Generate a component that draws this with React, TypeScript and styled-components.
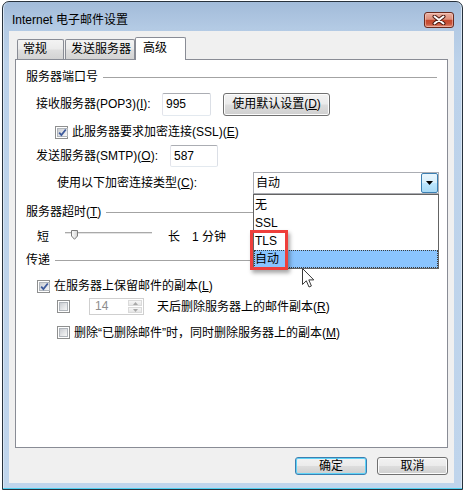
import React from "react";
import styled, { createGlobalStyle } from "styled-components";

const FONT = `"Liberation Sans", "Noto Sans CJK SC", sans-serif`;

const GlobalStyle = createGlobalStyle`
  html, body { margin: 0; padding: 0; background: #ffffff; }
  body { font-family: ${FONT}; font-size: 12px; color: #000; }
  * { box-sizing: border-box; }
`;

const Screen = styled.div`
  width: 464px;
  height: 490px;
  padding: 1px 1px 0 2px;
  overflow: hidden;
`;

const Window = styled.div`
  width: 461px;
  height: 489px;
  border: 1px solid #27313c;
  border-radius: 7px 7px 0 0;
  background: linear-gradient(180deg, #a2bbd9 0px, #b3cae4 26px, #bcd2ea 60px, #c0d5ec 100%);
  box-shadow: inset 0 -1px 0 #4fd0f0, inset 1px 0 0 #d9e6f4, inset -1px 0 0 #d9e6f4;
  padding: 0 8px 6px 6px;
  display: flex;
  flex-direction: column;
`;

const TitleBar = styled.div`
  height: 29px;
  display: flex;
  align-items: flex-start;
  padding-left: 3px;
`;

const TitleText = styled.div`
  flex: 1;
  margin-top: 11px;
  line-height: 14px;
  font-size: 12px;
  color: #000;
`;

const CloseButton = styled.div`
  width: 30px;
  height: 16px;
  margin-top: 10px;
  border: 1px solid #6a2a1e;
  border-radius: 3px;
  background: linear-gradient(180deg, #eab0a2 0%, #dd8f7b 45%, #c5472c 52%, #c85339 78%, #e0907a 100%);
  box-shadow: inset 0 0 0 1px rgba(255, 220, 210, 0.45);
  display: flex;
  align-items: center;
  justify-content: center;
`;

const Client = styled.div`
  height: 452px;
  background: #f0f0f0;
  display: flex;
  flex-direction: column;
  padding-top: 6px;
`;

const TabStrip = styled.div`
  height: 22px;
  display: flex;
  align-items: flex-end;
  padding-left: 8px;
`;

const Tab = styled.div<{ $w: number; $active?: boolean; $gap?: number }>`
  width: ${(p) => p.$w}px;
  height: ${(p) => (p.$active ? 23 : 20)}px;
  margin-right: ${(p) => p.$gap ?? 0}px;
  margin-bottom: ${(p) => (p.$active ? -1 : 0)}px;
  position: relative;
  z-index: ${(p) => (p.$active ? 2 : 1)};
  border: 1px solid #898c95;
  border-bottom: none;
  border-radius: 2px 2px 0 0;
  padding-left: ${(p) => (p.$active ? 7 : 5)}px;
  line-height: ${(p) => (p.$active ? 21 : 19)}px;
  background: ${(p) =>
    p.$active
      ? "#ffffff"
      : "linear-gradient(180deg, #f3f3f3 0%, #ebebeb 45%, #dedede 55%, #d3d3d3 100%)"};
`;

const Panel = styled.div`
  margin-left: 6px;
  width: 433px;
  height: 389px;
  border: 1px solid #898c95;
  background: #ffffff;
  position: relative;
  display: flex;
  flex-direction: column;
`;

const Group = styled.div<{ $mt: number }>`
  display: flex;
  align-items: center;
  height: 16px;
  margin-top: ${(p) => p.$mt}px;
  padding: 0 10px;
  line-height: 16px;
  &::after {
    content: "";
    flex: 1;
    height: 1px;
    background: #a3a3a3;
    margin-left: 5px;
  }
`;

const Row = styled.div<{ $mt: number; $indent: number; $h: number }>`
  display: flex;
  align-items: center;
  height: ${(p) => p.$h}px;
  margin-top: ${(p) => p.$mt}px;
  padding-left: ${(p) => p.$indent}px;
  line-height: 14px;
`;

const Label = styled.span<{ $w?: number; $ml?: number }>`
  display: inline-block;
  flex: none;
  width: ${(p) => (p.$w ? `${p.$w}px` : "auto")};
  margin-left: ${(p) => p.$ml ?? 0}px;
  white-space: nowrap;
`;

const U = styled.span`
  text-decoration: underline;
`;

const TextBox = styled.div<{ $w: number; $h: number }>`
  width: ${(p) => p.$w}px;
  height: ${(p) => p.$h}px;
  flex: none;
  border: 1px solid;
  border-color: #abadb3 #dbdfe6 #e3e9ef #e2e3ea;
  border-radius: 2px;
  background: #fff;
  padding-left: 3px;
  line-height: ${(p) => p.$h - 2}px;
`;

const WinButton = styled.div<{ $w: number; $h: number; $ml?: number; $default?: boolean }>`
  width: ${(p) => p.$w}px;
  height: ${(p) => p.$h}px;
  margin-left: ${(p) => p.$ml ?? 0}px;
  flex: none;
  border: 1px solid ${(p) => (p.$default ? "#3c7fb1" : "#707070")};
  border-radius: 3px;
  background: linear-gradient(180deg, #f2f2f2 0%, #ebebeb 48%, #dddddd 52%, #cfcfcf 100%);
  box-shadow: inset 0 0 0 1px ${(p) => (p.$default ? "#5fd3f7" : "#fcfcfc")};
  text-align: center;
  line-height: ${(p) => p.$h - 2}px;
`;

const CheckBox = styled.span<{ $ml?: number }>`
  width: 13px;
  height: 13px;
  flex: none;
  margin-right: 4px;
  margin-left: ${(p) => p.$ml ?? 0}px;
  border: 1px solid #8e8f8f;
  background: #fff;
  padding: 1px;
  display: flex;
`;

const CheckInner = styled.span`
  flex: 1;
  border: 1px solid #b0b5bb;
  background: linear-gradient(135deg, #c9ccd1 0%, #e6e7e9 60%, #f6f6f6 100%);
  display: flex;
  align-items: center;
  justify-content: center;
`;

const Combo = styled.div`
  position: relative;
  width: 186px;
  height: 22px;
  flex: none;
  border: 1px solid #abadb3;
  background: #fff;
  display: flex;
  align-items: stretch;
`;

const ComboText = styled.span`
  flex: 1;
  padding-left: 2px;
  line-height: 20px;
`;

const ComboArrow = styled.span`
  width: 17px;
  margin: 0 0 0 0;
  border: 1px solid #3c7fb1;
  border-radius: 2px;
  background: linear-gradient(180deg, #eaf6fd 0%, #d9f0fc 48%, #bee6fd 52%, #a7d9f5 100%);
  display: flex;
  align-items: center;
  justify-content: center;
`;

const DropList = styled.div`
  position: absolute;
  left: -1px;
  top: 21px;
  width: 186px;
  border: 1px solid #646464;
  background: #fff;
  padding-top: 1px;
  z-index: 5;
`;

const DropItem = styled.div<{ $active?: boolean }>`
  height: 18px;
  line-height: 18px;
  padding-left: 1px;
  background: ${(p) => (p.$active ? "#8ac4fe" : "transparent")};
  outline: ${(p) => (p.$active ? "1px dotted #3a3a3a" : "none")};
  outline-offset: -1px;
`;

const Slider = styled.div`
  position: relative;
  width: 87px;
  height: 16px;
  margin-left: 16px;
  flex: none;
  &::before {
    content: "";
    position: absolute;
    left: 0;
    right: 0;
    top: 3px;
    height: 3px;
    background: linear-gradient(180deg, #a9a9a9 0, #a9a9a9 1px, #e3e3e3 1px, #e3e3e3 2px, #ffffff 2px);
  }
`;

const Thumb = styled.svg`
  position: absolute;
  left: 6px;
  top: 1px;
`;

const Spin = styled.div`
  width: 55px;
  height: 17px;
  flex: none;
  margin-left: 15px;
  border: 1px solid #cfcfcf;
  background: #fff;
  display: flex;
`;

const SpinText = styled.span`
  flex: 1;
  padding-left: 5px;
  color: #8d8d8d;
  line-height: 15px;
`;

const SpinButtons = styled.div`
  width: 15px;
  display: flex;
  flex-direction: column;
  padding: 1px 1px 1px 0;
  gap: 1px;
`;

const SpinPart = styled.span`
  flex: 1;
  border: 1px solid #dadada;
  background: linear-gradient(180deg, #f6f6f6, #e6e6e6);
  display: flex;
  align-items: center;
  justify-content: center;
`;

const Highlight = styled.div`
  position: absolute;
  left: 234px;
  top: 170px;
  width: 38px;
  height: 40px;
  border: 3px solid #ee3f3b;
  box-shadow: 2px 3px 4px rgba(0, 0, 0, 0.35);
  z-index: 6;
`;

const Cursor = styled.svg`
  position: absolute;
  left: 286px;
  top: 208px;
  z-index: 7;
`;

const ButtonRow = styled.div`
  display: flex;
  justify-content: flex-end;
  gap: 10px;
  margin-top: 9px;
  padding-right: 6px;
`;

function Check({ checked, ml }: { checked?: boolean; ml?: number }) {
  return (
    <CheckBox $ml={ml}>
      <CheckInner>
        {checked && (
          <svg width="9" height="9" viewBox="0 0 9 9">
            <path d="M1.2 4.6 L3.4 7 L7.8 1.5" fill="none" stroke="#3d5a9c" strokeWidth="1.8" />
          </svg>
        )}
      </CheckInner>
    </CheckBox>
  );
}

export default function App() {
  return (
    <>
      <GlobalStyle />
      <Screen>
        <Window>
          <TitleBar>
            <TitleText>Internet 电子邮件设置</TitleText>
            <CloseButton>
              <svg width="14" height="10" viewBox="0 0 14 10">
                <path d="M2.5 1.5 L11.5 8.5 M11.5 1.5 L2.5 8.5" stroke="#4b1a12" strokeWidth="4" strokeLinecap="round" />
                <path d="M2.5 1.5 L11.5 8.5 M11.5 1.5 L2.5 8.5" stroke="#ffffff" strokeWidth="2" strokeLinecap="round" />
              </svg>
            </CloseButton>
          </TitleBar>
          <Client>
            <TabStrip>
              <Tab $w={47} $gap={1}>常规</Tab>
              <Tab $w={70}>发送服务器</Tab>
              <Tab $w={51} $active>高级</Tab>
            </TabStrip>
            <Panel>
              <Group $mt={9}>服务器端口号</Group>
              <Row $mt={7} $indent={20} $h={24}>
                <Label $w={126}>
                  接收服务器(POP3)(<U>I</U>):
                </Label>
                <TextBox $w={49} $h={23}>995</TextBox>
                <WinButton $w={107} $h={23} $ml={12}>
                  使用默认设置(<U>D</U>)
                </WinButton>
              </Row>
              <Row $mt={9} $indent={39} $h={14}>
                <Check checked />
                <Label>
                  此服务器要求加密连接(SSL)(<U>E</U>)
                </Label>
              </Row>
              <Row $mt={6} $indent={20} $h={22}>
                <Label $w={134}>
                  发送服务器(SMTP)(<U>O</U>):
                </Label>
                <TextBox $w={48} $h={22}>587</TextBox>
              </Row>
              <Row $mt={5} $indent={41} $h={22}>
                <Label $w={196}>
                  使用以下加密连接类型(<U>C</U>):
                </Label>
                <Combo>
                  <ComboText>自动</ComboText>
                  <ComboArrow>
                    <svg width="7" height="4" viewBox="0 0 7 4">
                      <path d="M0 0 H7 L3.5 4 Z" fill="#000" />
                    </svg>
                  </ComboArrow>
                  <DropList>
                    <DropItem>无</DropItem>
                    <DropItem>SSL</DropItem>
                    <DropItem>TLS</DropItem>
                    <DropItem $active>自动</DropItem>
                  </DropList>
                </Combo>
              </Row>
              <Group $mt={10}>
                服务器超时(<U>T</U>)
              </Group>
              <Row $mt={9} $indent={21} $h={16}>
                <Label>短</Label>
                <Slider>
                  <Thumb width="7" height="10" viewBox="0 0 7 10">
                    <defs>
                      <linearGradient id="tg" x1="0" y1="0" x2="1" y2="0">
                        <stop offset="0" stopColor="#ffffff" />
                        <stop offset="1" stopColor="#d4d4d4" />
                      </linearGradient>
                    </defs>
                    <path d="M0.5 0.5 H6.5 V6 L3.5 9.3 L0.5 6 Z" fill="url(#tg)" stroke="#7c7c7c" />
                  </Thumb>
                </Slider>
                <Label $ml={16}>长</Label>
                <Label $ml={12}>1 分钟</Label>
              </Row>
              <Group $mt={7}>传递</Group>
              <Row $mt={11} $indent={21} $h={14}>
                <Check checked />
                <Label>
                  在服务器上保留邮件的副本(<U>L</U>)
                </Label>
              </Row>
              <Row $mt={5} $indent={41} $h={17}>
                <Check />
                <Spin>
                  <SpinText>14</SpinText>
                  <SpinButtons>
                    <SpinPart>
                      <svg width="5" height="3" viewBox="0 0 5 3">
                        <path d="M0 3 H5 L2.5 0 Z" fill="#a8a8a8" />
                      </svg>
                    </SpinPart>
                    <SpinPart>
                      <svg width="5" height="3" viewBox="0 0 5 3">
                        <path d="M0 0 H5 L2.5 3 Z" fill="#a8a8a8" />
                      </svg>
                    </SpinPart>
                  </SpinButtons>
                </Spin>
                <Label $ml={13}>
                  天后删除服务器上的邮件副本(<U>R</U>)
                </Label>
              </Row>
              <Row $mt={11} $indent={41} $h={13}>
                <Check />
                <Label>
                  删除“已删除邮件”时，同时删除服务器上的副本(<U>M</U>)
                </Label>
              </Row>
              <Highlight />
              <Cursor width="13" height="21" viewBox="0 0 13 21">
                <path
                  d="M0.5 0.5 L0.5 16.5 L4.3 12.8 L7 19 L9.4 18 L6.8 11.9 L11.8 11.9 Z"
                  fill="#ffffff"
                  stroke="#3a3a3a"
                  strokeWidth="1"
                  strokeLinejoin="round"
                />
              </Cursor>
            </Panel>
            <ButtonRow>
              <WinButton $w={72} $h={18} $default>
                确定
              </WinButton>
              <WinButton $w={71} $h={18}>
                取消
              </WinButton>
            </ButtonRow>
          </Client>
        </Window>
      </Screen>
    </>
  );
}
